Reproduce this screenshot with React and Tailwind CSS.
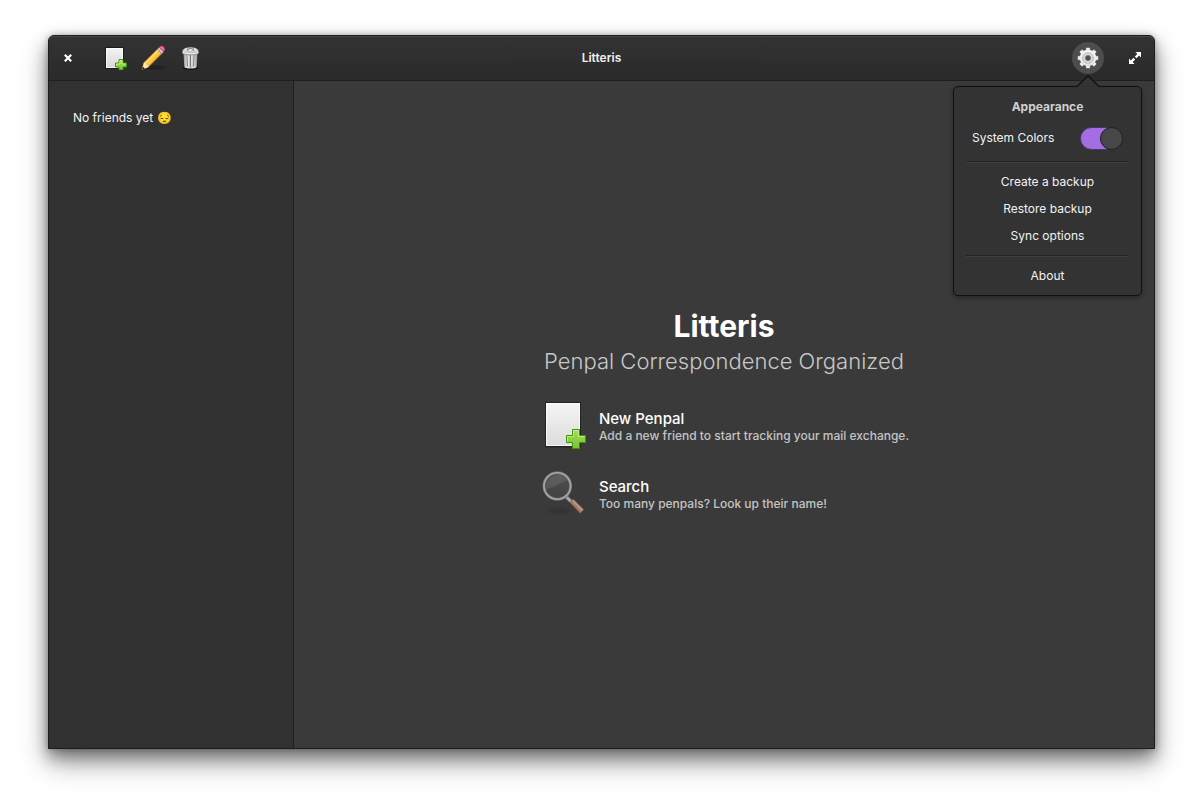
import { useState } from "react";

function PageIcon({ large }) {
  return large ? (
    <svg viewBox="0 0 48 48" className="size-12" aria-hidden="true">
      <defs>
        <linearGradient id="sheetL" x1="0" y1="0" x2="0" y2="1">
          <stop offset="0" stopColor="#f4f4f4" />
          <stop offset="1" stopColor="#dcdcdc" />
        </linearGradient>
        <linearGradient id="plusL" x1="0" y1="0" x2="0" y2="1">
          <stop offset="0" stopColor="#a4dc55" />
          <stop offset="1" stopColor="#78c72f" />
        </linearGradient>
      </defs>
      <rect x="6" y="1" width="36" height="45.500" rx="1" fill="#222" />
      <rect x="7" y="2" width="34" height="43" fill="url(#sheetL)" />
      <rect x="7.5" y="2.5" width="33" height="42" fill="none" stroke="#fff" strokeOpacity="0.7" />
      <path d="M33.500 28.500h7v6h6v7h-6v6h-7v-6h-6v-7h6z" fill="url(#plusL)" stroke="#3f9110" strokeLinejoin="round" />
      <path d="M34.500 34.500v-5h5v6h6M28.500 40.500v-5h6" fill="none" stroke="#d3f69c" strokeOpacity="0.7" />
    </svg>
  ) : (
    <svg viewBox="0 0 24 24" className="size-6" aria-hidden="true">
      <defs>
        <linearGradient id="sheetS" x1="0" y1="0" x2="0" y2="1">
          <stop offset="0" stopColor="#f4f4f4" />
          <stop offset="1" stopColor="#d8d8d8" />
        </linearGradient>
        <linearGradient id="plusS" x1="0" y1="0" x2="0" y2="1">
          <stop offset="0" stopColor="#a9e455" />
          <stop offset="1" stopColor="#78c72f" />
        </linearGradient>
      </defs>
      <rect x="1" y="1" width="19" height="22" rx="1" fill="#1c1c1c" />
      <rect x="2" y="2" width="17" height="20" fill="url(#sheetS)" />
      <rect x="2.500" y="2.500" width="16" height="19" fill="none" stroke="#fff" strokeOpacity="0.7" />
      <path d="M15 13.500h4v3.500h3.500v4H19v3h-4v-3h-3.500v-4H15z" fill="url(#plusS)" stroke="#3f9110" strokeLinejoin="round" />
      <path d="M16 17.500v-3h2v3.500h3.500M12.500 20v-2H16" fill="none" stroke="#d3f69c" strokeOpacity="0.75" />
    </svg>
  );
}

function PencilIcon() {
  return (
    <svg viewBox="0 0 24 24" className="size-6 overflow-visible" aria-hidden="true">
      <defs>
        <linearGradient id="wood" x1="0" y1="0" x2="1" y2="1">
          <stop offset="0.300" stopColor="#ffe16b" />
          <stop offset="0.550" stopColor="#f9c440" />
          <stop offset="0.700" stopColor="#d48e15" />
        </linearGradient>
      </defs>
      <ellipse cx="14" cy="21.500" rx="11" ry="2.200" fill="#000" opacity="0.22" />
      <path d="M1 23.400 3 16.500 16.300 3.200l4.500 4.500L7.500 21z" fill="url(#wood)" stroke="#a3610c" strokeWidth="0.700" strokeLinejoin="round" />
      <path d="M1 23.400 3 16.500l1.600.5.500 1.700 1.700.5.700 1.800z" fill="#f7e7c6" />
      <path d="M1 23.400l.8-2.800 2 2z" fill="#222" />
      <path d="M16.300 3.200l1.900-1.900 4.500 4.500-1.900 1.900z" fill="#c9ccd0" stroke="#777" strokeWidth="0.500" />
      <path d="M18.200 1.300l.8-.8c1-1 2.500-.6 3.600.4s1.700 2.700.7 3.700l-1 1z" fill="#f4679d" stroke="#bc245d" strokeWidth="0.600" />
      <path d="M4.500 16.800 17 4.300" stroke="#fff4b5" strokeWidth="0.900" opacity="0.8" />
    </svg>
  );
}

function TrashIcon() {
  return (
    <svg viewBox="0 0 24 24" className="size-6" aria-hidden="true">
      <defs>
        <linearGradient id="can" x1="0" y1="0" x2="1" y2="0">
          <stop offset="0" stopColor="#8f8f8f" />
          <stop offset="0.250" stopColor="#e8e8e8" />
          <stop offset="0.500" stopColor="#bcbcbc" />
          <stop offset="0.750" stopColor="#e4e4e4" />
          <stop offset="1" stopColor="#858585" />
        </linearGradient>
        <linearGradient id="lid" x1="0" y1="0" x2="0" y2="1">
          <stop offset="0" stopColor="#fafafa" />
          <stop offset="1" stopColor="#a9a9a9" />
        </linearGradient>
      </defs>
      <ellipse cx="12.500" cy="22" rx="8" ry="1.800" fill="#000" opacity="0.6" />
      <path d="M5.500 7h14l-.8 14c0 2-12.400 2-12.400 0z" fill="url(#can)" />
      <path d="M9 9.500l.4 10.500M12.500 9.500V20M16 9.500l-.4 10.500" stroke="#777" strokeWidth="1" strokeLinecap="round" />
      <path d="M10.200 9.500l.3 10.500M13.700 9.500V20" stroke="#fff" strokeWidth="0.700" opacity="0.75" />
      <path d="M4.500 5.500C4.500 3 7.500 1.500 12.500 1.500s8 1.500 8 4v2C18.500 9.500 6.500 9.500 4.500 7.500z" fill="url(#lid)" stroke="#777" strokeWidth="0.400" />
      <path d="M4.800 6.200c2.500 1.900 12.900 1.900 15.400 0" fill="none" stroke="#fff" strokeWidth="0.800" />
      <path d="M9.500 4.500c0-3.300 6-3.300 6 0" fill="none" stroke="#555" strokeWidth="1.200" />
      <path d="M9.800 3.600c.6-2.300 4.800-2.300 5.400 0" fill="none" stroke="#ddd" strokeWidth="0.800" />
    </svg>
  );
}

function GearIcon() {
  return (
    <svg viewBox="0 0 24 24" className="size-6" aria-hidden="true">
      <defs>
        <linearGradient id="gear" gradientUnits="userSpaceOnUse" x1="0" y1="2" x2="0" y2="22">
          <stop offset="0" stopColor="#fafafa" />
          <stop offset="1" stopColor="#dcdcdc" />
        </linearGradient>
      </defs>
      <g fill="#ececec" stroke="#333" strokeWidth="0.400">
        {[0, 45, 90, 135].map((a) => (
          <rect key={a} x="9.800" y="1.500" width="4.400" height="21" rx="1" transform={`rotate(${a} 12 12)`} />
        ))}
      </g>
      <circle cx="12" cy="12" r="8.300" fill="url(#gear)" />
      <circle cx="12" cy="12" r="5.300" fill="#d8d8d8" stroke="#b4b4b4" strokeWidth="0.900" />
      <circle cx="12" cy="12" r="2.600" fill="#4d4d4d" stroke="#777" strokeWidth="0.800" />
    </svg>
  );
}

function SearchIcon() {
  return (
    <svg viewBox="0 0 48 48" className="size-12" aria-hidden="true">
      <defs>
        <radialGradient id="shade">
          <stop offset="0" stopColor="#000" stopOpacity="0.16" />
          <stop offset="1" stopColor="#000" stopOpacity="0" />
        </radialGradient>
        <linearGradient id="glass" x1="0" y1="0" x2="0" y2="1">
          <stop offset="0" stopColor="#666" />
          <stop offset="1" stopColor="#484848" />
        </linearGradient>
        <linearGradient id="handle" x1="0" y1="1" x2="1" y2="0">
          <stop offset="0.300" stopColor="#7d5d49" />
          <stop offset="0.600" stopColor="#c19a80" />
        </linearGradient>
      </defs>
      <ellipse cx="20" cy="42" rx="17" ry="5" fill="url(#shade)" />
      <path d="M27.500 28l5 5" stroke="#555" strokeWidth="4.500" />
      <path d="M27.500 28l5 5" stroke="#a9abae" strokeWidth="2.500" />
      <path d="M30.800 33.600l3.500-3.500 10.500 10.500-3.600 4.200z" fill="url(#handle)" stroke="#5d4334" strokeWidth="0.700" strokeLinejoin="round" />
      <circle cx="18.300" cy="17" r="12.800" fill="url(#glass)" fillOpacity="0.5" />
      <path d="M6.500 18C8 5 25 2 29 11.500 22 12 17 19 6.500 20z" fill="#fff" opacity="0.09" />
      <circle cx="18.300" cy="17" r="13.300" fill="none" stroke="#6b6d70" strokeWidth="3" />
      <circle cx="18.300" cy="17" r="13.300" fill="none" stroke="#a4a6a9" strokeWidth="1.600" />
    </svg>
  );
}

function HeaderButton({ label, children, className = "" }) {
  return (
    <button type="button" aria-label={label} className={`flex size-8 items-center justify-center ${className}`}>
      {children}
    </button>
  );
}

function MenuItem({ children }) {
  return (
    <button type="button" className="block h-[27px] w-full text-center text-xs">
      {children}
    </button>
  );
}

function Divider() {
  return <hr className="mx-3 h-[2px] border-0 border-t border-[#232323] bg-[#3f3f3f]" />;
}

function SettingsMenu() {
  const [systemColors, setSystemColors] = useState(true);
  return (
    <div className="absolute top-11 -right-[38px] z-10 w-[189px] rounded-[5px] border border-[#101010] bg-[#333] pt-2 pb-1.5 text-[#f2f2f2] shadow-[0_2px_5px_rgba(0,0,0,0.35)]">
      <svg viewBox="0 0 24 12" className="absolute -top-3 right-[41px] h-3 w-6" aria-hidden="true">
        <path d="M1 12 12 1l11 11z" fill="#333" />
        <path d="M1 11.500 12 .8l11 10.700" fill="none" stroke="#101010" strokeWidth="1.200" />
      </svg>
      <h2 className="text-center text-xs leading-6 font-bold text-[#cfcfcf]">Appearance</h2>
      <label className="mb-1 flex h-[38px] items-center justify-between px-[18px] text-xs">
        System Colors
        <span className="relative flex h-[23px] w-[43px]">
          <input
            type="checkbox"
            role="switch"
            checked={systemColors}
            onChange={(e) => setSystemColors(e.target.checked)}
            className="peer h-[23px] w-[43px] appearance-none rounded-full border border-[#1a1a1a] bg-[#2a2a2a] checked:border-[#4a3462] checked:bg-[#a56de2]"
          />
          <span className="pointer-events-none absolute top-0 left-0 size-[23px] rounded-full border border-[#1c1c1c] bg-[#484848] peer-checked:left-5" />
        </span>
      </label>
      <Divider />
      <div className="pt-[5px] pb-1.5">
        <MenuItem>Create a backup</MenuItem>
        <MenuItem>Restore backup</MenuItem>
        <MenuItem>Sync options</MenuItem>
      </div>
      <Divider />
      <div className="pt-[5px]">
        <MenuItem>About</MenuItem>
      </div>
    </div>
  );
}

function WelcomeAction({ icon, title, text }) {
  return (
    <button type="button" className="flex items-center gap-3 text-left">
      {icon}
      <span className="flex flex-col pt-1">
        <span className="text-[15px] leading-[18px] font-medium text-white">{title}</span>
        <span className="text-xs font-medium text-[#c4c4c4]">{text}</span>
      </span>
    </button>
  );
}

export default function App() {
  return (
    <div className="flex min-h-screen flex-col bg-white px-12 pt-[35px] pb-[61px] font-['Inter',sans-serif]">
      <div className="flex grow flex-col rounded-t-md border border-[#1d1d1d] bg-[#3a3a3a] shadow-[0_14px_28px_rgba(0,0,0,0.35),0_8px_16px_rgba(0,0,0,0.35),0_0_6px_rgba(0,0,0,0.25)]">
        <header className="grid h-[45px] grid-cols-[1fr_auto_1fr] items-center rounded-t-[5px] border-b border-[#1e1e1e] bg-linear-to-b from-[#333] to-[#2a2a2a] shadow-[inset_0_1px_0_#484848]">
          <div className="flex items-center gap-[5px] pl-[3px]">
            <HeaderButton label="Close" className="mr-[11px]">
              <svg viewBox="0 0 16 16" className="size-4" aria-hidden="true">
                <path d="M4.800 4.800l6.400 6.400M11.200 4.800l-6.400 6.400" stroke="#fff" strokeWidth="2.200" />
              </svg>
            </HeaderButton>
            <HeaderButton label="New penpal">
              <PageIcon />
            </HeaderButton>
            <HeaderButton label="Edit">
              <PencilIcon />
            </HeaderButton>
            <HeaderButton label="Delete">
              <TrashIcon />
            </HeaderButton>
          </div>
          <h1 className="text-xs font-semibold text-[#f0f0f0]">Litteris</h1>
          <div className="flex items-center justify-end gap-[15px] pr-[3px]">
            <div className="relative">
              <HeaderButton label="Settings" className="rounded-full bg-[#4d4d4d]">
                <GearIcon />
              </HeaderButton>
              <SettingsMenu />
            </div>
            <HeaderButton label="Maximize">
              <svg viewBox="0 0 16 16" className="size-4" aria-hidden="true">
                <path d="M8.500 2H14v5.500l-1.900-1.900-2.600 2.600-1.700-1.700 2.600-2.600zM7.500 14H2V8.500l1.900 1.900 2.600-2.600 1.700 1.700-2.600 2.600z" fill="#fff" />
              </svg>
            </HeaderButton>
          </div>
        </header>
        <div className="flex grow">
          <aside className="w-[245px] shrink-0 border-r border-[#1e1e1e] bg-[#313131] px-6 py-7">
            <p className="text-xs leading-[18px] text-[#f4f4f4]">No friends yet 😔</p>
          </aside>
          <main className="flex grow flex-col items-center justify-center pb-1">
            <h2 className="mb-px text-[30px] leading-9 font-bold text-white">Litteris</h2>
            <p className="text-[22px] leading-8 font-light text-[#c8c8c8]">Penpal Correspondence Organized</p>
            <div className="mt-6 flex flex-col gap-5">
              <WelcomeAction icon={<PageIcon large />} title="New Penpal" text="Add a new friend to start tracking your mail exchange." />
              <WelcomeAction icon={<SearchIcon />} title="Search" text="Too many penpals? Look up their name!" />
            </div>
          </main>
        </div>
      </div>
    </div>
  );
}
